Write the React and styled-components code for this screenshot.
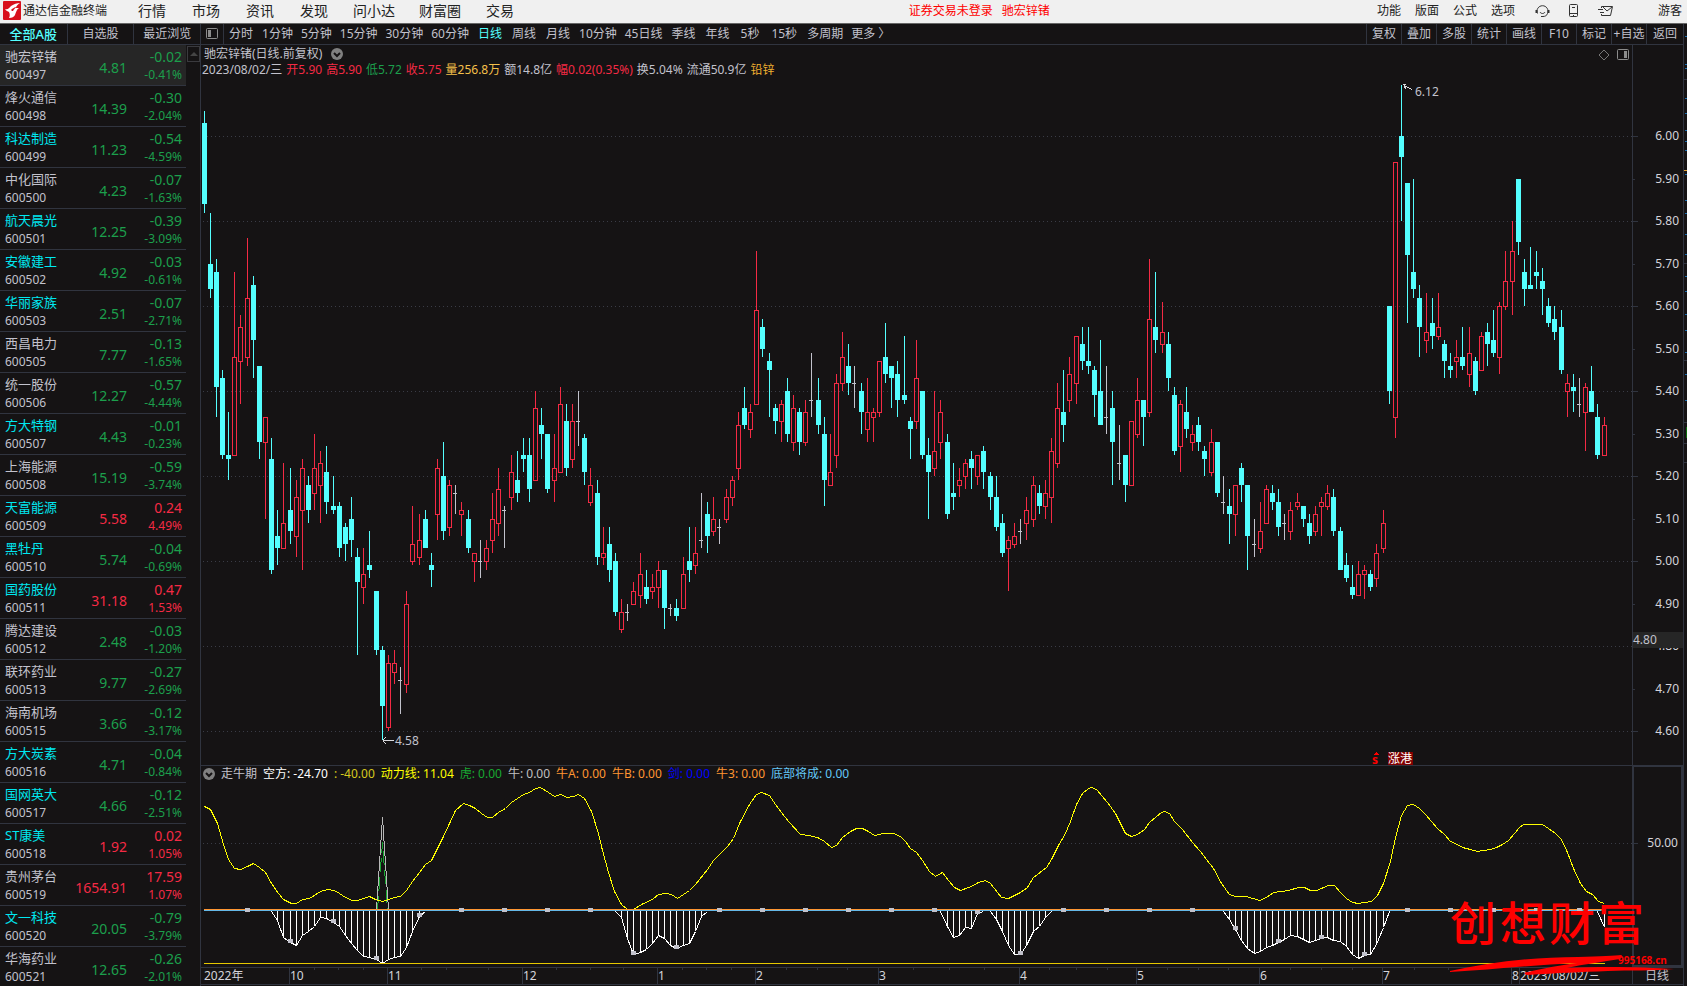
import React, { useState } from 'react';

import styled, { createGlobalStyle } from 'styled-components'

const CYAN = '#54ffff'
const RED = '#f42a44'
const GREEN = '#1c9f4c'
const GREY = '#c2c2cc'
const LINE = '#30343f'

const PERIODS = [
  ['分时', 5], ['1分钟', 4], ['5分钟', 4], ['15分钟', 4], ['30分钟', 4], ['60分钟', 4],
  ['日线', 5], ['周线', 5], ['月线', 5], ['10分钟', 4], ['45日线', 4], ['季线', 5],
  ['年线', 5], ['5秒', 6], ['15秒', 6], ['多周期', 4], ['更多 〉', 4],
]

const TOOLS = ['复权', '叠加', '多股', '统计', '画线', 'F10', '标记', '+自选', '返回']

// name, code, price, change, percent, highlighted name
const STOCKS = [
  ['驰宏锌锗', '600497', '4.81', '-0.02', '-0.41%', false],
  ['烽火通信', '600498', '14.39', '-0.30', '-2.04%', false],
  ['科达制造', '600499', '11.23', '-0.54', '-4.59%', true],
  ['中化国际', '600500', '4.23', '-0.07', '-1.63%', false],
  ['航天晨光', '600501', '12.25', '-0.39', '-3.09%', true],
  ['安徽建工', '600502', '4.92', '-0.03', '-0.61%', true],
  ['华丽家族', '600503', '2.51', '-0.07', '-2.71%', true],
  ['西昌电力', '600505', '7.77', '-0.13', '-1.65%', false],
  ['统一股份', '600506', '12.27', '-0.57', '-4.44%', false],
  ['方大特钢', '600507', '4.43', '-0.01', '-0.23%', true],
  ['上海能源', '600508', '15.19', '-0.59', '-3.74%', false],
  ['天富能源', '600509', '5.58', '0.24', '4.49%', true],
  ['黑牡丹', '600510', '5.74', '-0.04', '-0.69%', true],
  ['国药股份', '600511', '31.18', '0.47', '1.53%', true],
  ['腾达建设', '600512', '2.48', '-0.03', '-1.20%', false],
  ['联环药业', '600513', '9.77', '-0.27', '-2.69%', false],
  ['海南机场', '600515', '3.66', '-0.12', '-3.17%', false],
  ['方大炭素', '600516', '4.71', '-0.04', '-0.84%', true],
  ['国网英大', '600517', '4.66', '-0.12', '-2.51%', true],
  ['ST康美', '600518', '1.92', '0.02', '1.05%', true],
  ['贵州茅台', '600519', '1654.91', '17.59', '1.07%', false],
  ['文一科技', '600520', '20.05', '-0.79', '-3.79%', true],
  ['华海药业', '600521', '12.65', '-0.26', '-2.01%', false],
]

const QUOTE = [
  ['2023/08/02/三', GREY], ['开5.90', RED], ['高5.90', RED], ['低5.72', GREEN], ['收5.75', RED],
  ['量256.8万', '#f5c04a'], ['额14.8亿', GREY], ['幅0.02(0.35%)', RED], ['换5.04%', GREY],
  ['流通50.9亿', GREY], ['铅锌', '#f0b030'],
]

const READINGS = [
  ['走牛期', GREY], ['空方: -24.70', '#ffffff'], [': -40.00', '#d6c81e'], ['动力线: 11.04', '#ffff00'],
  ['虎: 0.00', '#18a832'], ['牛: 0.00', '#c0c0c0'], ['牛A: 0.00', '#ff9632'], ['牛B: 0.00', '#ff9632'],
  ['剑: 0.00', '#0000ff'], ['牛3: 0.00', '#ff9632'], ['底部将成: 0.00', '#64c8f8'],
]

// open, high, low, close in cents
const CANDLES = [
  [603,606,582,584],[570,582,562,564],[568,571,534,541],[543,545,524,525],[525,535,519,524],[525,568,525,548],
  [547,558,537,555],[548,576,546,562],[565,567,543,552],[546,546,524,528],[528,534,510,534],[524,529,497,498],
  [506,512,499,503],[503,523,503,509],[512,522,504,507],[506,519,501,515],[512,524,498,522],[518,520,509,512],
  [516,530,512,522],[518,526,509,523],[521,527,511,514],[513,520,511,512],[513,514,501,503],[508,509,500,504],
  [510,515,501,505],[501,503,478,495],[494,503,490,497],[499,507,496,498],[493,493,478,479],[479,480,458,466],
  [461,478,460,476],[474,479,471,476],[472,475,464,472],[471,493,469,490],[500,513,499,504],[501,511,499,505],
  [510,512,503,503],[499,502,494,498],[511,524,505,522],[520,528,505,507],[508,519,506,518],[516,518,511,516],
  [511,514,506,512],[510,512,502,503],[500,502,495,502],[500,505,496,500],[500,505,498,503],[505,516,502,510],
  [509,522,506,517],[512,513,503,512],[515,525,512,521],[519,526,514,516],[525,529,521,524],[525,529,514,517],
  [519,540,519,536],[532,536,524,530],[530,530,516,517],[519,530,514,522],[521,541,521,537],[533,537,520,522],
  [524,537,522,533],[533,540,527,533],[529,530,518,521],[514,522,513,518],[516,519,499,501],[501,508,499,502],
  [504,508,495,498],[500,502,487,488],[484,491,483,488],[488,490,486,488],[490,495,490,493],[492,502,489,497],
  [494,498,490,491],[493,497,491,494],[494,500,489,498],[498,498,484,489],[489,490,487,489],[489,491,486,487],
  [489,501,489,497],[500,508,495,498],[499,508,497,502],[505,516,503,505],[511,514,502,506],[507,515,506,510],
  [508,510,504,508],[510,517,509,515],[515,520,513,519],[522,535,519,532],[536,541,531,532],[531,537,529,535],
  [537,573,537,559],[555,557,548,550],[547,549,534,545],[536,537,530,533],[533,538,528,537],[540,543,528,530],
  [528,539,526,536],[535,536,525,528],[528,538,527,535],[538,549,534,538],[538,543,530,532],[530,534,513,519],
  [518,530,518,521],[525,544,522,542],[542,554,540,548],[546,551,539,542],[542,546,536,542],[540,542,530,535],
  [531,543,528,535],[534,536,528,535],[535,547,534,547],[548,556,542,544],[546,546,536,543],[544,547,534,538],
  [539,553,537,538],[533,534,524,531],[533,552,531,543],[540,540,524,525],[525,529,510,521],[522,540,520,526],
  [528,538,524,535],[528,530,510,511],[516,523,512,515],[518,522,515,519],[520,524,517,523],[524,526,517,522],
  [520,525,518,525],[526,527,517,521],[520,521,512,515],[515,520,507,508],[509,511,501,502],[503,506,493,505],
  [504,509,503,506],[507,510,504,507],[509,515,505,512],[510,520,508,518],[516,518,511,513],[513,519,510,516],
  [515,529,509,526],[523,542,522,536],[535,545,528,532],[538,548,535,544],[542,553,537,553],[551,555,545,547],
  [547,555,544,546],[545,546,534,539],[540,552,532,532],[534,546,530,534],[536,540,518,528],[523,532,519,523],
  [525,525,514,518],[518,533,518,533],[530,543,529,538],[538,538,527,534],[535,571,534,557],[555,568,549,552],
  [551,561,549,554],[551,554,540,543],[539,541,525,526],[527,538,521,537],[535,541,529,531],[528,532,526,530],
  [532,534,526,528],[526,527,520,524],[521,531,520,528],[528,528,515,516],[514,520,511,514],[513,517,504,511],
  [511,518,506,518],[522,523,514,518],[518,518,498,506],[504,510,501,504],[503,514,502,507],[509,518,509,517],
  [516,518,512,514],[514,517,506,508],[509,511,505,509],[507,514,505,512],[513,516,512,514],[513,513,508,510],
  [509,511,504,506],[507,513,506,511],[513,515,506,514],[513,518,512,516],[515,517,506,507],[507,508,498,498],
  [499,502,495,496],[494,499,491,492],[492,500,492,497],[497,499,491,498],[497,498,493,494],[496,504,494,502],
  [503,512,502,509],[560,560,537,540],[534,594,529,594],[600,612,580,595],[589,589,556,572],[568,590,562,564],
  [562,565,548,555],[552,563,549,554],[556,562,550,553],[553,563,552,555],[551,552,543,547],[546,549,543,545],
  [547,552,543,548],[548,555,545,546],[544,555,541,549],[547,548,539,540],[545,554,545,553],[554,556,546,551],
  [552,559,548,549],[548,561,544,560],[560,573,559,566],[566,580,558,573],[590,590,572,575],[568,571,560,564],
  [565,574,564,564],[568,573,564,567],[566,569,558,564],[560,562,555,556],[557,560,552,554],[555,559,544,545],
  [540,544,534,542],[541,544,535,540],[537,543,534,537],[535,542,526,541],[540,546,535,535],[534,537,524,525],
  [525,534,525,532],
]

// runs of histogram depth below zero, keyed by the first bar
const DEPTHS = [
  [11, [0,9,26,31,34,24,20,15,6,7,11,15,24,32,39,45,46,48,52,48,46,45,36,20,5,0]],
  [67, [0,6,27,43,41,38,32,24,27,34,37,34,32,20,5,0]],
  [120, [0,15,26,24,16,17,2,0]],
  [128, [0,8,20,34,43,43,34,20,15,6,0]],
  [166, [0,8,18,29,37,42,40,36,34,31,28,24,25,28,31,29,27,26,29,30,35,43,47,44,43,33,16,0]],
  [227, [0,16]],
]

const MOMENTUM = `3,22 9,25 16,39 22,60 27,75 33,84 39,85 46,82 52,79 58,83 64,88 70,99 77,109 82,115 90,119 95,119
101,115 108,114 119,107 126,105 133,106 138,109 144,113 151,116 156,116 162,114 168,112 174,115 181,117 187,115
193,113 199,112 205,106 211,97 218,88 224,80 230,76 236,64 242,52 248,39 254,26 262,19 268,21 274,24 280,29
286,33 291,33 297,28 304,24 310,18 316,14 322,10 328,8 334,4 339,3 347,8 353,12 359,10 366,13 372,12 377,10
383,14 390,27 397,49 401,66 407,88 413,107 420,120 426,125 432,125 440,120 451,115 457,110 464,109 470,110
476,114 482,110 488,106 494,100 506,85 512,76 519,69 526,62 532,54 538,39 548,20 555,10 560,8 568,11 574,20
580,28 587,37 599,50 607,51 616,53 623,57 630,63 635,61 641,53 649,47 655,44 661,44 667,47 673,51 682,49 692,49
699,52 704,57 709,64 715,68 721,76 728,87 734,92 741,88 747,96 753,103 759,106 770,102 777,98 784,96 789,99
800,113 807,114 819,108 826,103 832,93 845,83 850,75 857,61 863,51 869,37 875,20 881,9 887,4 890,3 895,5 906,18
914,29 919,39 924,49 930,52 936,50 943,45 948,38 955,32 960,28 963,27 968,29 973,37 981,45 991,58 999,67 1005,75
1012,84 1020,99 1028,110 1034,112 1045,112 1058,116 1065,113 1072,108 1087,106 1097,103 1103,103 1109,106
1115,106 1127,101 1133,101 1139,108 1145,114 1151,118 1157,119 1163,118 1170,117 1176,111 1182,99 1189,77
1194,53 1200,31 1206,21 1212,20 1218,24 1224,30 1236,44 1243,50 1249,57 1256,60 1261,63 1269,65 1276,67 1282,66
1289,65 1295,63 1301,60 1307,56 1313,49 1318,43 1322,40 1341,40 1347,44 1354,49 1360,55 1366,68 1372,84 1379,99
1385,107 1391,110 1397,117 1403,119`

const MONTHS = [[88, '10'], [186, '11'], [321, '12'], [456, '1'], [554, '2'], [677, '3'], [818, '4'], [935, '5'], [1058, '6'], [1181, '7'], [1310, '8']]
const WEEKS = [113, 137, 162, 220, 245, 287, 355, 389, 422, 481, 505, 530, 585, 616, 646, 712, 748, 783, 848, 875, 906, 966, 997, 1027, 1089, 1120, 1151, 1213, 1247, 1278]

const PRICES = [600, 590, 580, 570, 560, 550, 540, 530, 520, 510, 500, 490, 480, 470, 460]
const ZERO = 125

const barX = i => 3 + Math.floor(i * 6.1404 + 0.1)
const priceY = cents => Math.round((600 - cents) * 4.25)

const Candle = ({ x, candle }) => {
  const [open, high, low, close] = candle
  const top = priceY(Math.max(open, close))
  const bottom = priceY(Math.min(open, close))
  const highY = priceY(high)
  const lowY = priceY(low)

  if (open === close) {
    return (
      <g fill={GREY}>
        <rect x={x} y={highY} width="1" height={lowY - highY} />
        <rect x={x - 2} y={top} width="4" height="1" />
      </g>
    )
  }
  if (close < open) {
    return (
      <g fill={CYAN}>
        <rect x={x} y={highY} width="1" height={lowY - highY} />
        <rect x={x - 2} y={top} width="5" height={bottom - top} />
      </g>
    )
  }
  return (
    <g fill={RED}>
      <rect x={x} y={highY} width="1" height={top - highY} />
      <rect x={x} y={bottom} width="1" height={lowY - bottom} />
      <path d={`M${x - 2} ${top}h5v${bottom - top + 1}h-5zm1 1v${bottom - top - 1}h3v${1 + top - bottom}z`} fillRule="evenodd" />
    </g>
  )
}

const PriceChart = () => (
  <Plot role="img" aria-label="日线">
    <g transform="translate(0 58)">
      {PRICES.filter(p => p % 20 === 0).map(p => (
        <DotLine key={p} x1="2" x2="100%" y1={priceY(p) + 0.5} y2={priceY(p) + 0.5} />
      ))}
      {CANDLES.map((candle, i) => <Candle key={i} x={barX(i)} candle={candle} />)}
    </g>
    <Arrow d="M1201.5 6.5h3M1203 7.500l8 4M1203 8l2 3" />
    <ChartText x="1214" y="18">6.12</ChartText>
    <Arrow d="M182 662.5h11M182 662l3-3M182 663l3 3" />
    <ChartText x="194" y="667">4.58</ChartText>
    <path d="M1172 677l3-3 3 3z" fill="#ff0000" />
    <Marker x="1171" y="686">s</Marker>
    <rect x="1187" y="674" width="25" height="13" fill="#800000" />
    <BadgeText x="1187" y="685">涨港</BadgeText>
  </Plot>
)

const IndicatorChart = () => {
  const depthAt = {}
  DEPTHS.forEach(([start, run]) => run.forEach((d, k) => { depthAt[start + k] = d }))

  return (
    <Plot role="img" aria-label="走牛期">
      <DotLine x1="2" x2="100%" y1="59.5" y2="59.5" />
      {DEPTHS.map(([start, run]) => (
        <g key={start}>
          {run.map((d, k) => <rect key={k} x={barX(start + k)} y={ZERO} width="1" height={d + 2} fill="#ffffff" />)}
          <Trace points={run.map((d, k) => `${barX(start + k)},${ZERO + 2 + d}`).join(' ')} stroke="#ffffff" />
        </g>
      ))}
      <Trace points="175,125 181,33 187,125" stroke="#b8b8b8" />
      <Trace points="176,125 181,58 186,125" stroke="#18a832" strokeDasharray="14 5" />
      <Trace points={MOMENTUM} stroke="#ffff00" />
      <rect x="3" y={ZERO} width="1401" height="1" fill="#ff9632" />
      <rect x="3" y={ZERO + 1} width="1401" height="1" fill="#64b8e8" />
      <rect x="3" y="179" width="1401" height="1" fill="#e6c800" />
      {CANDLES.map((c, i) => i % 7 === 0 && i > 0 && (
        <rect key={i} x={barX(i) - 2} y={ZERO - 1 + (depthAt[i] || 0)} width="5" height="4" fill={GREY} />
      ))}
    </Plot>
  )
}

const PriceScale = () => (
  <Plot aria-hidden="true">
    {PRICES.map(p => (
      <g key={p}>
        <rect x="0" y={priceY(p) + 91} width={p % 20 ? 2 : 5} height="1" fill={LINE} />
        <ScaleText x="46" y={priceY(p) + 95}>{(p / 100).toFixed(2)}</ScaleText>
      </g>
    ))}
    <rect x="0" y="587" width="50" height="16" fill="#262626" />
    <ChartText x="0" y="599">4.80</ChartText>
  </Plot>
)

const TimeScale = () => (
  <Plot aria-hidden="true">
    {WEEKS.map(x => <rect key={x} x={x} y="0" width="1" height="2" fill={LINE} />)}
    <AxisText x="3" y="12">2022年</AxisText>
    {MONTHS.map(([x, label]) => (
      <g key={label}>
        <rect x={x} y="0" width="1" height="16" fill={LINE} />
        <AxisText x={x + 1} y="12">{label}</AxisText>
      </g>
    ))}
    <rect x="1318" y="0" width="1" height="16" fill={LINE} />
    <AxisText x="1319" y="12">2023/08/02/三</AxisText>
  </Plot>
)

const Logo = () => (
  <svg width="18" height="19" viewBox="0 0 18 19" aria-hidden="true">
    <rect width="18" height="19" rx="1" fill="#d8101c" />
    <path d="M2 8c3 1 4-1 6-3 3-2 6-3 9-3-2 1-4 3-4 5l3 0c-2 1-3 4-4 7-1 2-3 3-6 3 1-2 1-4 0-6-1-1-3-1-4-3z" fill="#fff" />
    <path d="M8 9c1-1 3-3 6-3-2 1-3 2-4 4-1 0-1 0-2-1z" fill="#d8101c" />
  </svg>
)

const DropIcon = () => (
  <svg width="12" height="12" viewBox="0 0 12 12" aria-hidden="true">
    <circle cx="6" cy="6" r="6" fill="#808080" />
    <path d="M3 5l3 3 3-3" fill="none" stroke="#151314" strokeWidth="2" />
  </svg>
)

const SideIcon = ({ right }) => (
  <svg width="12" height="12" viewBox="0 0 12 12" aria-hidden="true">
    <rect x=".5" y=".5" width="11" height="10" rx="1" fill="none" stroke="#8c8c8c" />
    <rect x={right ? 7 : 2} y="2" width="3" height="7" fill="#8c8c8c" />
  </svg>
)

const Watermark = () => (
  <Stamp width="232" height="84" viewBox="0 0 232 84" aria-label="创想财富">
    <StampText x="8" y="52">创</StampText>
    <StampText x="58" y="52">想</StampText>
    <StampText x="107" y="52">财</StampText>
    <StampText x="156" y="52">富</StampText>
    <path d="M8 83c40-9 85-14 128-14 22-1 38-1 43-2q3 1-1 4c-17 3-36 5-53 9 35-2 80-1 107 1-20 2-45 1-66 2-28 1-49 2-81 4q-6-2 1-3c16-4 34-7 49-9-43 2-88 7-127 9z" fill="#ff0000" />
    <StampUrl x="176" y="76">995168.cn</StampUrl>
  </Stamp>
)

const EDGE_TICKS = [34, 62, 66, 96, 111, 128, 139, 148, 172, 198, 211, 232, 252, 274, 289, 312, 328, 350, 372, 398]

const App = () => {
  const [period, setPeriod] = useState('日线')
  const [selected, setSelected] = useState('600497')
  const [group, setGroup] = useState('全部A股')

  return (
    <Page>
      <GlobalStyle />
      <TopBar>
        <Brand><Logo />通达信金融终端</Brand>
        <Menu>
          {['行情', '市场', '资讯', '发现', '问小达', '财富圈', '交易'].map(item => (
            <MenuButton key={item} $wide={item.length > 2}>{item}</MenuButton>
          ))}
        </Menu>
        <Space $grow={7} />
        <Notice><span>证券交易未登录</span><span>驰宏锌锗</span></Notice>
        <Space $grow={6} />
        <Options>
          {['功能', '版面', '公式', '选项'].map(item => <PlainButton key={item}>{item}</PlainButton>)}
        </Options>
        <Shortcuts>
          <PlainButton aria-label="客服">
            <svg width="15" height="14" viewBox="0 0 15 14" fill="none" stroke="#333">
              <path d="M2.500 9.500a5.500 5.500 0 1 1 10 0M5 8c1 2 4 2 5 0M8 12.500h-2M8 12.500c2 0 4-1 4.500-3" />
              <path d="M1.500 6v3M13.500 6v3" strokeWidth="2" />
            </svg>
          </PlainButton>
          <PlainButton aria-label="手机">
            <svg width="10" height="14" viewBox="0 0 10 14" fill="none" stroke="#333">
              <rect x=".5" y=".5" width="8" height="12" rx="1" />
              <path d="M3 3.500h3M1 9.500h7M4 11.500h1" />
            </svg>
          </PlainButton>
          <PlainButton aria-label="消息">
            <svg width="16" height="12" viewBox="0 0 16 12" fill="none" stroke="#333">
              <path d="M3.500 3V1.500h11l-2 9h-9V9M5 2l4 4 5-4M0 4.500h5M2 7.500h4" />
            </svg>
          </PlainButton>
        </Shortcuts>
        <PlainButton>游客</PlainButton>
      </TopBar>

      <Body>
        <Sidebar>
          <Groups>
            {['全部A股', '自选股', '最近浏览'].map(item => (
              <GroupButton key={item} $active={item === group} onClick={() => setGroup(item)}>{item}</GroupButton>
            ))}
          </Groups>
          <ListArea>
            <StockTable>
              <tbody>
                {STOCKS.map(([name, code, price, change, percent, marked]) => (
                  <StockRow key={code} $selected={code === selected} onClick={() => setSelected(code)}>
                    <NameCell>
                      <StockName $marked={marked}>{name}</StockName>
                      <Small>{code}</Small>
                    </NameCell>
                    <PriceCell $down={change[0] === '-'}>{price}</PriceCell>
                    <ChangeCell $down={change[0] === '-'}>
                      <Change>{change}</Change>
                      <Small>{percent}</Small>
                    </ChangeCell>
                  </StockRow>
                ))}
              </tbody>
            </StockTable>
            <ScrollUp aria-label="上翻">
              <svg width="8" height="4" viewBox="0 0 8 4"><path d="M4 0l4 4H0z" fill="#444" /></svg>
            </ScrollUp>
          </ListArea>
        </Sidebar>

        <Workspace>
          <Toolbar>
            <ToggleButton aria-label="侧栏"><SideIcon /></ToggleButton>
            {PERIODS.map(([label, pad]) => (
              <PeriodButton key={label} $pad={pad} $active={label === period} onClick={() => setPeriod(label)}>
                {label}
              </PeriodButton>
            ))}
            <Space $grow={1} />
            {TOOLS.map(label => <ToolButton key={label}>{label}</ToolButton>)}
          </Toolbar>

          <PriceRow>
            <Panel>
              <ChartHeader>
                <div>
                  <Title>驰宏锌锗(日线.前复权)<DropIcon /></Title>
                  <Quote>{QUOTE.map(([text, color]) => <Tinted key={text} $color={color}>{text}</Tinted>)}</Quote>
                </div>
                <HeaderIcons>
                  <svg width="12" height="12" viewBox="0 0 12 12" aria-hidden="true">
                    <path d="M6 1l5 5-5 5-5-5z" fill="none" stroke="#777" />
                  </svg>
                  <SideIcon right />
                </HeaderIcons>
              </ChartHeader>
              <PriceChart />
            </Panel>
            <Scale><PriceScale /></Scale>
          </PriceRow>

          <IndicatorRow>
            <Panel>
              <Readings>
                <DropIcon />
                {READINGS.map(([text, color]) => <Tinted key={text} $color={color}>{text}</Tinted>)}
              </Readings>
              <IndicatorChart />
            </Panel>
            <FramedScale>
              <Plot aria-hidden="true">
                <rect x="0" y="76" width="4" height="1" fill={LINE} />
                <ScaleText x="44" y="80">50.00</ScaleText>
              </Plot>
            </FramedScale>
            <Watermark />
          </IndicatorRow>

          <TimeRow>
            <TimeScale />
            <PeriodLabel>日线</PeriodLabel>
          </TimeRow>
        </Workspace>

        <Edge>
          <svg width="3" height="962" aria-hidden="true">
            {EDGE_TICKS.map(y => <rect key={y} x="1" y={y - 22} width="2" height="1" fill="#1c6fb0" />)}
            {[55, 239, 336, 398, 419, 438].map(y => <rect key={y} x="0" y={y} width="3" height="1" fill={LINE} />)}
            <rect x="0" y="146" width="3" height="1" fill="#e0a030" />
            <rect x="2" y="403" width="1" height="11" fill="#0a6a0a" />
          </svg>
        </Edge>
      </Body>
    </Page>
  )
}

export default App


const GlobalStyle = createGlobalStyle`
body {
  margin: 0;
  background: #151314;
  font-family: "Noto Sans", "Noto Sans CJK SC", sans-serif;
  font-size: 12px;
  color: ${GREY};
}

button {
  margin: 0;
  padding: 0;
  border: 0;
  background: none;
  font: inherit;
  color: inherit;
  white-space: nowrap;
  cursor: pointer;
}
`

const Page = styled.div`
display: flex;
flex-direction: column;
height: 100vh;
overflow: hidden;
`

const TopBar = styled.header`
display: flex;
align-items: center;
flex: none;
height: 21px;
padding: 0 5px 2px 0;
border-bottom: 1px solid #666;
background: #f0f0f0;
color: #222;
line-height: 20px;
`

const Brand = styled.div`
display: flex;
align-items: center;
gap: 2px;
width: 122px;
padding-left: 3px;
white-space: nowrap;
`

const Menu = styled.nav`
display: flex;
`

const MenuButton = styled.button`
width: ${props => (props.$wide ? '66px' : '54px')};
font-size: 14px;
`

const Space = styled.div`
flex: ${props => props.$grow};
`

const Notice = styled.div`
display: flex;
gap: 9px;
color: #ff0000;
`

const PlainButton = styled.button`
display: flex;
align-items: center;
`

const Options = styled.div`
display: flex;
gap: 14px;
`

const Shortcuts = styled.div`
display: flex;
align-items: center;
gap: 19px;
margin: 0 44px 0 20px;
`

const Body = styled.div`
display: flex;
flex: 1;
min-height: 0;
`

const Sidebar = styled.aside`
display: flex;
flex-direction: column;
width: 200px;
border-right: 1px solid ${LINE};
`

const Groups = styled.div`
display: grid;
grid-template-columns: repeat(3, 1fr);
flex: none;
height: 20px;
border-bottom: 1px solid ${LINE};
`

const GroupButton = styled.button`
font-size: ${props => (props.$active ? '13px' : '12px')};
font-weight: ${props => (props.$active ? 500 : 400)};
line-height: 18px;
color: ${props => (props.$active ? CYAN : GREY)};

& + & {
  border-left: 1px solid ${LINE};
}
`

const ListArea = styled.div`
display: flex;
align-items: flex-start;
gap: 1px;
flex: 1;
min-height: 0;
overflow: hidden;
`

const StockTable = styled.table`
flex: 1;
border-spacing: 0;
table-layout: fixed;

td {
  box-sizing: border-box;
  height: 41px;
  padding: 0;
  border-bottom: 1px solid ${LINE};
  white-space: nowrap;
}
`

const StockRow = styled.tr`
background: ${props => (props.$selected ? '#262626' : 'transparent')};
cursor: pointer;
`

const NameCell = styled.td`
width: 66px;

&& {
  padding-left: 5px;
}
`

const StockName = styled.div`
font-size: 13px;
line-height: 17px;
color: ${props => (props.$marked ? '#00e8f0' : GREY)};
`

const Small = styled.div`
margin-top: 1px;
line-height: 17px;
`

const PriceCell = styled.td`
font-size: 14px;
text-align: right;
color: ${props => (props.$down ? GREEN : RED)};

&& {
  padding-top: 4px;
}
`

const ChangeCell = styled.td`
width: 59px;
text-align: right;
color: ${props => (props.$down ? GREEN : RED)};

&& {
  padding-right: 4px;
}
`

const Change = styled.div`
font-size: 14px;
line-height: 17px;
`

const ScrollUp = styled.button`
display: flex;
align-items: center;
justify-content: center;
width: 13px;
height: 16px;
margin-top: 1px;
border: 1px solid #3a3a3e;
`

const Workspace = styled.main`
display: flex;
flex-direction: column;
flex: 1;
min-width: 0;
`

const Toolbar = styled.div`
display: flex;
flex: none;
height: 20px;
border-bottom: 1px solid ${LINE};
line-height: 18px;
`

const ToggleButton = styled.button`
display: flex;
align-items: center;
justify-content: center;
width: 23px;
border-right: 1px solid ${LINE};
`

const PeriodButton = styled.button`
padding: 0 ${props => props.$pad}px;
color: ${props => (props.$active ? CYAN : GREY)};
`

const ToolButton = styled.button`
box-sizing: border-box;
width: 35px;
border-left: 1px solid ${LINE};

&:last-child {
  width: 37px;
}
`

const PriceRow = styled.section`
display: flex;
flex: 1;
min-height: 0;
`

const IndicatorRow = styled.section`
position: relative;
display: flex;
flex: none;
height: 201px;
border-top: 1px solid ${LINE};
`

const TimeRow = styled.footer`
display: flex;
flex: none;
height: 16px;
margin-bottom: 1px;
border-top: 1px solid ${LINE};
border-bottom: 1px solid ${LINE};
`

const PeriodLabel = styled.div`
flex: none;
box-sizing: border-box;
width: 51px;
padding-right: 2px;
border-left: 1px solid ${LINE};
line-height: 16px;
text-align: center;
`

const Panel = styled.div`
display: flex;
flex-direction: column;
flex: 1;
min-width: 0;
`

const Scale = styled.div`
display: flex;
flex: none;
width: 50px;
border-left: 1px solid ${LINE};
`

const FramedScale = styled.div`
display: flex;
flex: none;
box-sizing: border-box;
width: 51px;
border: 2px solid ${LINE};
border-top-width: 1px;
`

const ChartHeader = styled.div`
display: flex;
justify-content: space-between;
flex: none;
height: 33px;
padding: 0 3px 0 1px;
line-height: 16px;
white-space: nowrap;
`

const Title = styled.div`
display: flex;
align-items: center;
gap: 9px;
padding: 1px 0 0 2px;
`

const Quote = styled.div`
display: flex;
gap: 4px;
`

const Tinted = styled.span`
color: ${props => props.$color};
`

const HeaderIcons = styled.div`
display: flex;
gap: 7px;
padding-top: 4px;
`

const Readings = styled.div`
display: flex;
align-items: center;
gap: 6px;
flex: none;
height: 16px;
padding: 0 0 2px 2px;
line-height: 16px;
white-space: nowrap;
`

const Plot = styled.svg`
display: block;
flex: 1;
width: 100%;
min-width: 0;
min-height: 0;
overflow: visible;
shape-rendering: crispEdges;
`

const DotLine = styled.line`
stroke: #3a3c46;
stroke-dasharray: 1 3;
`

const Trace = styled.polyline.attrs({ transform: 'translate(0.5 0.5)' })`
fill: none;
`

const Arrow = styled.path`
fill: none;
stroke: #d8d8dc;
`

const ChartText = styled.text`
font-size: 12px;
fill: ${GREY};
`

const AxisText = styled(ChartText)`
fill: #d4d4da;
`

const ScaleText = styled(AxisText)`
text-anchor: end;
`

const BadgeText = styled(ChartText)`
fill: #ffffff;
`

const Marker = styled(ChartText)`
font-weight: 700;
fill: #ff0000;
`

const Stamp = styled.svg`
position: absolute;
right: 9px;
bottom: -5px;
overflow: visible;
pointer-events: none;
`

const StampText = styled.text`
font-family: "Noto Sans CJK SC", sans-serif;
font-size: 46px;
font-weight: 500;
fill: #ff0000;
`

const StampUrl = styled.text`
font-size: 10px;
font-weight: 700;
fill: #ff0000;
`

const Edge = styled.div`
flex: none;
width: 3px;
border-left: 1px solid ${LINE};
overflow: hidden;
`
